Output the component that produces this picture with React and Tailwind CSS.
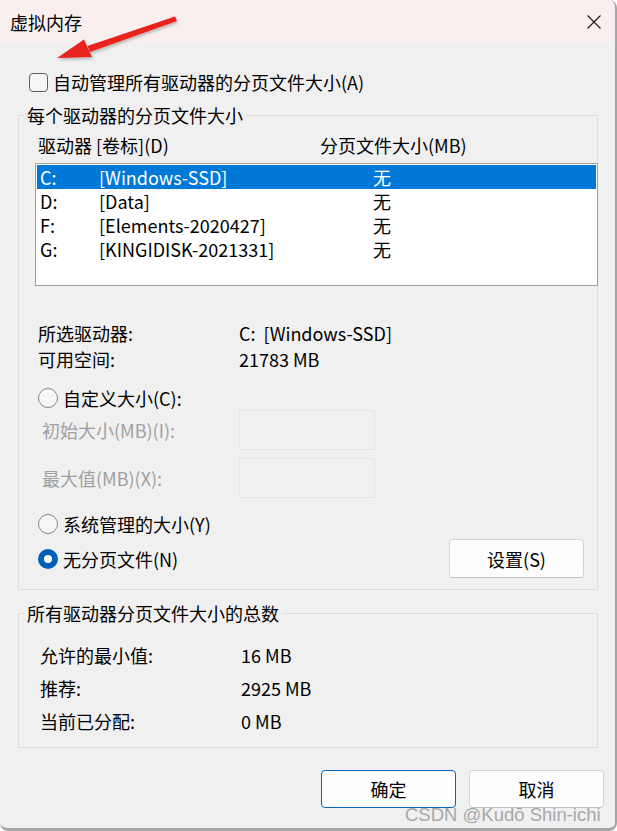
import React from 'react';

const drives = [
  ['C:', '[Windows-SSD]', '无'],
  ['D:', '[Data]', '无'],
  ['F:', '[Elements-2020427]', '无'],
  ['G:', '[KINGIDISK-2021331]', '无'],
];

function Radio({ checked, label }) {
  return (
    <div className="flex items-center h-[24px]">
      {checked ? (
        <span className="w-[20px] h-[20px] rounded-full bg-[#005fb8] flex items-center justify-center">
          <span className="w-[8px] h-[8px] rounded-full bg-white" />
        </span>
      ) : (
        <span className="w-[20px] h-[20px] rounded-full border border-[#858585] bg-[#f6f6f6]" />
      )}
      <span className="ml-[5px]">{label}</span>
    </div>
  );
}

function Button({ primary, children }) {
  return (
    <button
      className={`w-[135px] h-[38px] rounded-[4px] bg-[#fdfdfd] flex items-center justify-center ${
        primary ? 'border border-[#0067c0]' : 'border border-[#d5d5d5] border-b-[#c2c2c2]'
      }`}
    >
      {children}
    </button>
  );
}

export default function App() {
  return (
    <div className="w-[617px] h-[831px] bg-white">
      <div className="relative w-[617px] h-[831px] bg-[#f0f0f0] border-r-[2px] border-b-[3px] border-[#a6a6a6] rounded-tr-[8px] rounded-b-[8px] overflow-hidden flex flex-col text-[18px] leading-[24px] text-black font-['Noto_Sans_CJK_SC',sans-serif]">
        {/* 标题栏 */}
        <div className="h-[43px] shrink-0 bg-[#f9efef] flex items-center justify-between pl-[10px] pr-[14px]">
          <span>虚拟内存</span>
          <svg width="14" height="14" viewBox="0 0 14 14" className="mt-[1px]">
            <path d="M0.5 0.5 L13.5 13.5 M13.5 0.5 L0.5 13.5" stroke="#1a1a1a" strokeWidth="1.1" />
          </svg>
        </div>

        {/* 红色箭头标注 */}
        <svg className="absolute left-0 top-0" width="200" height="80" viewBox="0 0 200 80">
          <defs>
            <filter id="sh" x="-20%" y="-40%" width="140%" height="180%">
              <feDropShadow dx="1" dy="2" stdDeviation="1.5" floodColor="#000" floodOpacity="0.25" />
            </filter>
          </defs>
          <g filter="url(#sh)" fill="#e8221c">
            <polygon points="175,16.5 177,21 90,52 87.5,46" />
            <polygon points="57,58 84,39.5 92,57" />
          </g>
        </svg>

        <div className="mt-[27px] h-[24px] pl-[29px] flex items-center">
          <span className="w-[19px] h-[19px] rounded-[4px] border border-[#5f5f5f] bg-[#f6f6f6]" />
          <span className="ml-[5px]">自动管理所有驱动器的分页文件大小(A)</span>
        </div>

        {/* 每个驱动器 */}
        <fieldset className="mt-[12px] ml-[18px] w-[580px] min-w-0 border border-[#dcdcdc] pb-[11px]">
          <legend className="ml-[5px] px-[3px] leading-[18px]">每个驱动器的分页文件大小</legend>

          <div className="mt-[9px] h-[24px] pl-[19px] flex items-center">
            <span className="w-[282px]">驱动器 [卷标](D)</span>
            <span>分页文件大小(MB)</span>
          </div>

          <div className="mt-[6px] ml-[16px] w-[563px] h-[123px] border border-[#a0a0a0] bg-white p-[1px]">
            {drives.map(([letter, name, size], i) => (
              <div
                key={letter}
                className={`h-[24px] flex items-center pl-[3px] ${i === 0 ? 'bg-[#0078d7] text-white' : ''}`}
              >
                <span className="w-[59px]">{letter}</span>
                <span className="w-[274px]">{name}</span>
                <span>{size}</span>
              </div>
            ))}
          </div>

          <div className="mt-[34px] pl-[19px]">
            <div className="h-[26px] flex items-center">
              <span className="w-[201px]">所选驱动器:</span>
              <span>C:&nbsp;&nbsp;[Windows-SSD]</span>
            </div>
            <div className="h-[26px] flex items-center">
              <span className="w-[201px]">可用空间:</span>
              <span>21783 MB</span>
            </div>
          </div>

          <div className="mt-[14px] pl-[19px]">
            <Radio label="自定义大小(C):" />
          </div>

          <div className="h-[40px] pl-[23px] flex items-center text-[#a0a0a0]">
            <span className="w-[197px]">初始大小(MB)(I):</span>
            <span className="w-[136px] h-[40px] border border-[#e4e4e4]" />
          </div>
          <div className="mt-[8px] h-[40px] pl-[23px] flex items-center text-[#a0a0a0]">
            <span className="w-[197px]">最大值(MB)(X):</span>
            <span className="w-[136px] h-[40px] border border-[#e4e4e4]" />
          </div>

          <div className="mt-[14px] pl-[19px]">
            <Radio label="系统管理的大小(Y)" />
          </div>

          <div className="mt-[3px] h-[39px] pl-[19px] pr-[13px] flex items-center justify-between">
            <Radio checked label="无分页文件(N)" />
            <button className="w-[135px] h-[39px] rounded-[4px] bg-[#fdfdfd] border border-[#d5d5d5] border-b-[#c2c2c2]">
              设置(S)
            </button>
          </div>
        </fieldset>

        {/* 总数 */}
        <fieldset className="mt-[14px] ml-[18px] w-[580px] min-w-0 border border-[#dcdcdc] pb-[10px]">
          <legend className="ml-[5px] px-[3px] leading-[18px]">所有驱动器分页文件大小的总数</legend>
          <div className="mt-[16px] pl-[21px]">
            {[
              ['允许的最小值:', '16 MB'],
              ['推荐:', '2925 MB'],
              ['当前已分配:', '0 MB'],
            ].map(([k, v]) => (
              <div key={k} className="h-[33px] flex items-center">
                <span className="w-[201px]">{k}</span>
                <span>{v}</span>
              </div>
            ))}
          </div>
        </fieldset>

        <div className="mt-[22px] flex justify-end gap-[13px] pr-[11px]">
          <Button primary>确定</Button>
          <Button>取消</Button>
        </div>

        <span className="absolute left-[405px] top-[805px] leading-[20px] text-[18.5px] text-[#a8a8a8] font-['Liberation_Sans',sans-serif]">
          CSDN @Kudō Shin-ichi
        </span>
      </div>
    </div>
  );
}
